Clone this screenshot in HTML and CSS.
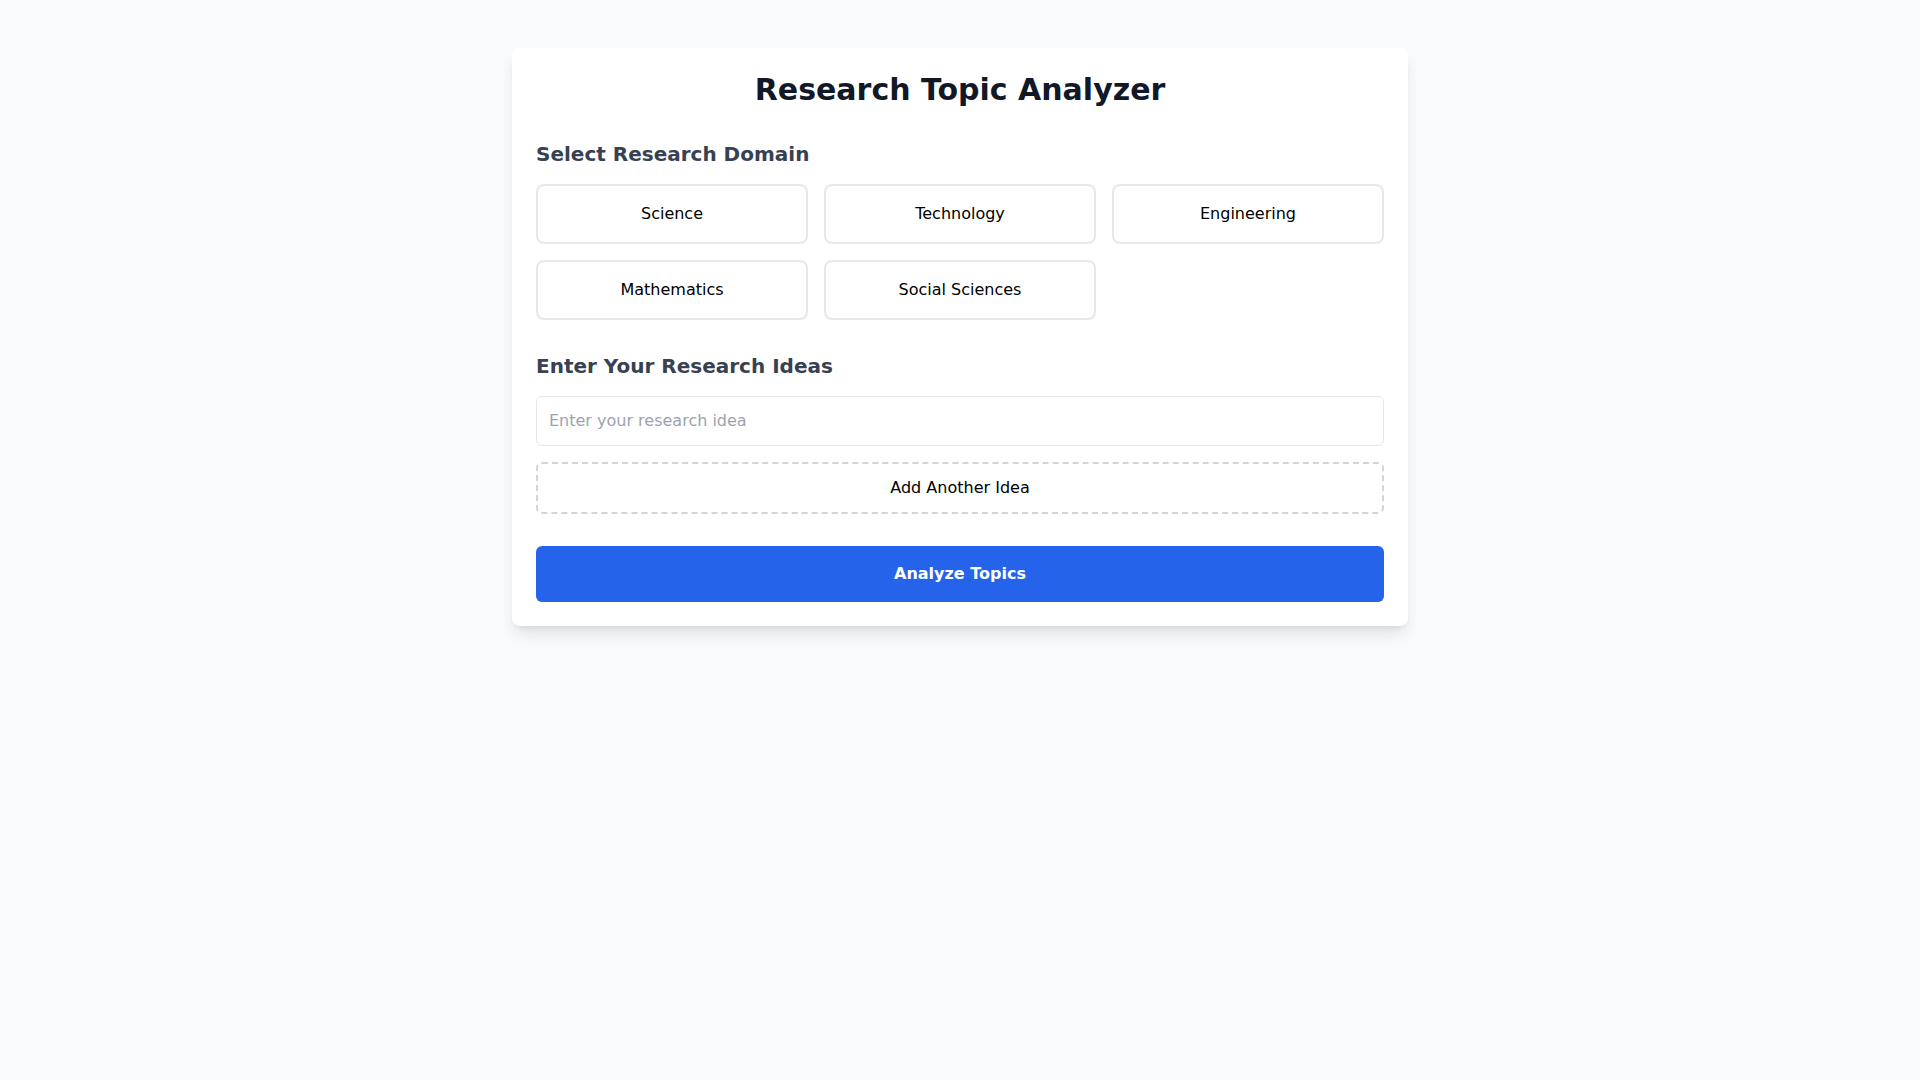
FILE: index.html
```html
<!DOCTYPE html>
<html lang="en">
  <head>
    <meta charset="UTF-8" />
    <meta name="viewport" content="width=device-width, initial-scale=1.0" />
    <title>Research Topic Analyzer</title>
    <link rel="stylesheet" href="styles.css">
  </head>
  <body>
    <div class="container">
      <h1 class="title">Research Topic Analyzer</h1>

      <div class="section">
        <h2 class="heading">Select Research Domain</h2>
        <div class="domains">
          <button class="domain">Science</button>
          <button class="domain">Technology</button>
          <button class="domain">Engineering</button>
          <button class="domain">Mathematics</button>
          <button class="domain">Social Sciences</button>
        </div>
      </div>

      <div class="section">
        <h2 class="heading">Enter Your Research Ideas</h2>
        <div class="ideas">
          <input class="idea" type="text" placeholder="Enter your research idea" />
        </div>
        <button class="add">Add Another Idea</button>
      </div>

      <button class="analyze">Analyze Topics</button>
    </div>
  </body>
</html>
```

FILE: styles.css
```css
* {
  box-sizing: border-box;
}
body {
  margin: 0;
  padding: 48px 16px;
  background-color: #f9fafb;
  font-family: 'DejaVu Sans', sans-serif;
  color: #111827;
}
.container {
  max-width: 896px;
  margin: 0 auto;
  padding: 24px;
  background-color: white;
  border-radius: 8px;
  box-shadow: 0 10px 15px -3px rgba(0, 0, 0, 0.1), 0 4px 6px -4px rgba(0, 0, 0, 0.1);
}
.title {
  margin: 0 0 32px;
  font-size: 30px;
  line-height: 36px;
  font-weight: bold;
  text-align: center;
  color: #111827;
}
.section {
  margin-bottom: 32px;
}
.heading {
  margin: 0 0 16px;
  font-size: 20px;
  line-height: 28px;
  font-weight: 600;
  color: #374151;
}
.domains {
  display: grid;
  grid-template-columns: repeat(3, 1fr);
  gap: 16px;
}
.domain {
  padding: 16px;
  border: 2px solid #e5e7eb;
  border-radius: 8px;
  background-color: white;
  font-family: inherit;
  font-size: 16px;
  line-height: 24px;
  color: black;
}
.ideas {
  margin-bottom: 16px;
}
.idea {
  display: block;
  width: 100%;
  padding: 12px;
  border: 1px solid #e5e7eb;
  border-radius: 6px;
  font-family: inherit;
  font-size: 16px;
  line-height: 24px;
  color: #111827;
}
.idea::placeholder {
  color: #9ca3af;
}
.add {
  display: block;
  width: 100%;
  padding: 12px;
  border: 2px dashed #d1d5db;
  border-radius: 6px;
  background-color: white;
  font-family: inherit;
  font-size: 16px;
  line-height: 24px;
  color: black;
}
.analyze {
  display: block;
  width: 100%;
  padding: 16px;
  border: none;
  border-radius: 6px;
  background-color: #2563eb;
  color: white;
  font-family: inherit;
  font-size: 16px;
  line-height: 24px;
  font-weight: bold;
}
```
